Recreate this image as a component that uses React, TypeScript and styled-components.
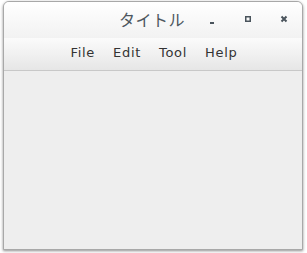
import React from "react";
import styled, { createGlobalStyle } from "styled-components";

const GlobalStyle = createGlobalStyle`
  html, body {
    margin: 0;
    padding: 0;
    background: #ffffff;
  }
  body {
    font-family: "DejaVu Sans", "Noto Sans CJK JP", sans-serif;
  }
`;

const Page = styled.div`
  padding: 1px 4px 3px 3px;
`;

const Window = styled.div`
  width: 300px;
  height: 249px;
  box-sizing: border-box;
  display: flex;
  flex-direction: column;
  background: #eeeeee;
  border: 1px solid #a8a8a8;
  border-radius: 6px 6px 0 0;
  box-shadow: 0 1px 3px rgba(0, 0, 0, 0.45);
  overflow: hidden;
`;

const TitleBar = styled.div`
  position: relative;
  height: 36px;
  flex: none;
  display: flex;
  align-items: center;
  justify-content: center;
  background: linear-gradient(#ffffff, #f2f2f2);
`;

const Title = styled.span`
  font-family: "Noto Sans CJK JP", "DejaVu Sans", sans-serif;
  font-size: 16px;
  color: #4e575f;
  letter-spacing: 0.5px;
  margin: 0 0 3px -2px;
`;

const Controls = styled.div`
  position: absolute;
  right: 12px;
  top: 0;
  bottom: 0;
  display: flex;
  align-items: center;
  gap: 24px;
  padding-bottom: 2px;
`;

const ControlButton = styled.div`
  width: 12px;
  height: 12px;
  display: flex;
  align-items: center;
  justify-content: center;
  color: #4a545c;
`;

const MenuBar = styled.div`
  height: 33px;
  flex: none;
  display: flex;
  align-items: center;
  justify-content: center;
  gap: 18px;
  box-sizing: border-box;
  border-bottom: 1px solid #c8c8c8;
  background: linear-gradient(#fbfbfb, #e6e6e6);
  padding: 0 0 3px 2px;
`;

const MenuItem = styled.span`
  font-size: 13px;
  color: #333333;
  letter-spacing: 0.7px;
`;

const Body = styled.div`
  flex: 1;
  background: #eeeeee;
`;

export default function App() {
  return (
    <Page>
      <GlobalStyle />
      <Window>
        <TitleBar>
          <Title>タイトル</Title>
          <Controls>
            <ControlButton>
              <svg width="12" height="12" viewBox="0 0 12 12">
                <rect x="4" y="9" width="4" height="2" fill="currentColor" />
              </svg>
            </ControlButton>
            <ControlButton>
              <svg width="12" height="12" viewBox="0 0 12 12">
                <rect x="3.75" y="3.75" width="4.5" height="4.5" fill="none" stroke="currentColor" strokeWidth="1.5" />
              </svg>
            </ControlButton>
            <ControlButton>
              <svg width="12" height="12" viewBox="0 0 12 12">
                <path d="M3.5 3.5 L8.5 8.5 M8.5 3.5 L3.5 8.5" stroke="currentColor" strokeWidth="2" />
              </svg>
            </ControlButton>
          </Controls>
        </TitleBar>
        <MenuBar>
          <MenuItem>File</MenuItem>
          <MenuItem>Edit</MenuItem>
          <MenuItem>Tool</MenuItem>
          <MenuItem>Help</MenuItem>
        </MenuBar>
        <Body />
      </Window>
    </Page>
  );
}
